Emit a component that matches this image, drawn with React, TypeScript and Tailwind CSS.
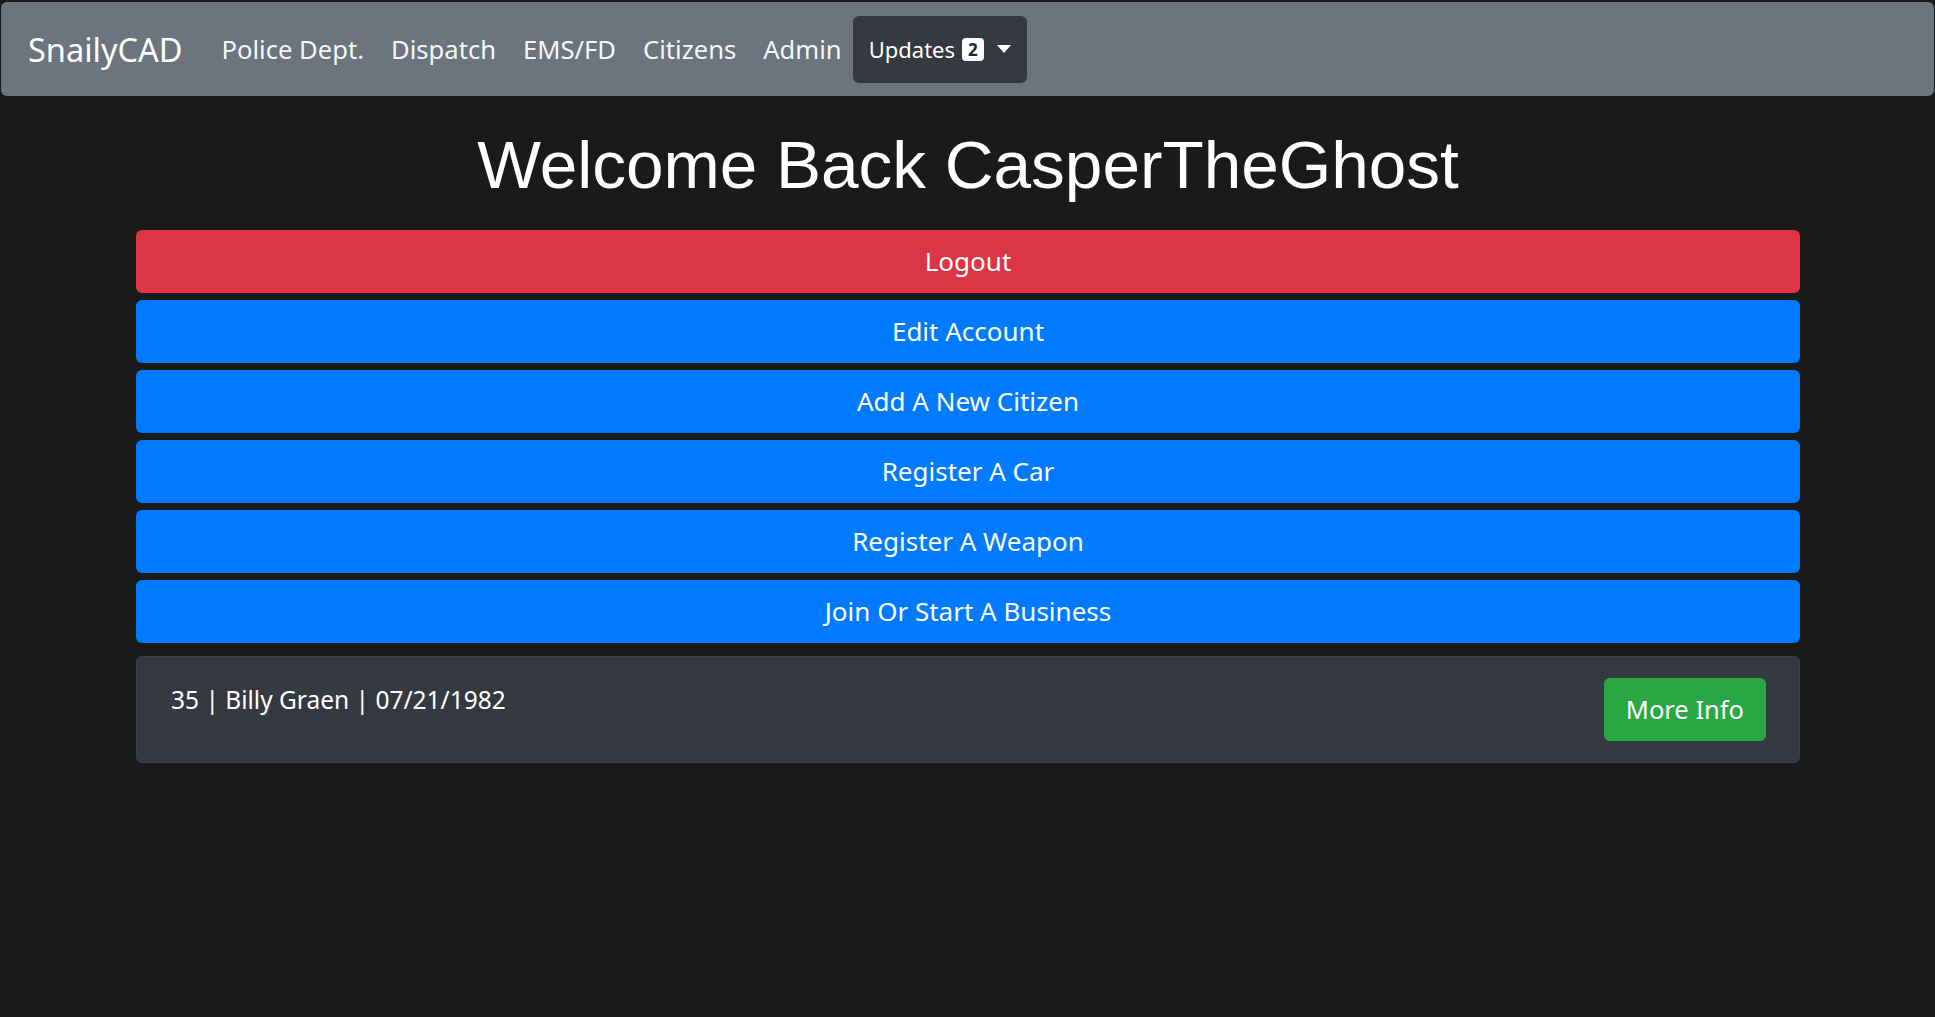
export default function App() {
  const links = ['Police Dept.', 'Dispatch', 'EMS/FD', 'Citizens', 'Admin'];

  const actions = [
    { name: 'Logout', color: 'bg-[#dc3545]' },
    { name: 'Edit Account', color: 'bg-[#007bff]' },
    { name: 'Add A New Citizen', color: 'bg-[#007bff]' },
    { name: 'Register A Car', color: 'bg-[#007bff]' },
    { name: 'Register A Weapon', color: 'bg-[#007bff]' },
    { name: 'Join Or Start A Business', color: 'bg-[#007bff]' }
  ];

  return (
    <div className="min-h-screen bg-[#1a1a1a] text-white font-['Noto_Sans',sans-serif] pt-[2px] px-px">
      <nav className="flex items-center h-[94px] bg-[#6c757d] rounded-md px-[27px] pt-[3px]">
        <span className="text-[32.5px] mr-[39px]">SnailyCAD</span>
        <div className="flex items-center gap-[27px] text-[25.6px]">
          {links.map((l) => (
            <a key={l} className="text-white/95">{l}</a>
          ))}
        </div>
        <div className="ml-[11px] -mt-[3px] flex items-center gap-[7px] h-[67px] bg-[#343a40] rounded-md px-[16px] text-[22px]">
          <span>Updates</span>
          <span className="bg-white text-[#212529] text-[17px] font-bold leading-none rounded px-[6px] py-[3px]">2</span>
          <span className="ml-[6px] w-0 h-0 border-x-[7px] border-x-transparent border-t-[8px] border-t-white" />
        </div>
      </nav>

      <div className="pl-[135px] pr-[134px]">
        <h1 className="text-center font-['Liberation_Sans',sans-serif] text-[67.5px] leading-none pt-[35px] pb-[31px]">
          Welcome Back CasperTheGhost
        </h1>

        <div className="flex flex-col gap-[7px]">
          {actions.map((a) => (
            <button key={a.name} className={`${a.color} h-[63px] rounded-md text-[26px] text-white`}>
              {a.name}
            </button>
          ))}
        </div>

        <div className="mt-[13px] flex justify-between items-start bg-[#343a40] border border-[#3d434a] rounded-md pl-[34px] pr-[33px] py-[21px]">
          <span className="text-[24.5px] leading-[44px]">35 | Billy Graen | 07/21/1982</span>
          <button className="bg-[#28a745] rounded-md h-[63px] px-[22px] text-[25.5px] text-white">More Info</button>
        </div>
      </div>
    </div>
  );
}
